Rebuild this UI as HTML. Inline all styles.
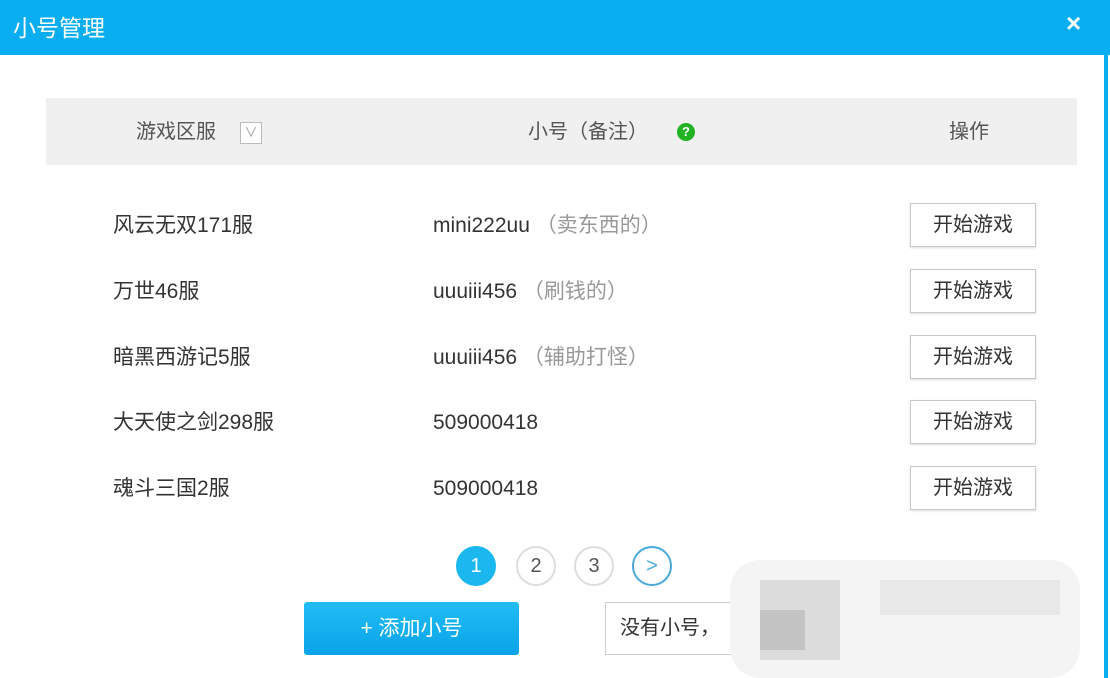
<!DOCTYPE html><html><head><meta charset="utf-8"><style>
body{margin:0;width:1110px;height:678px;background:#fff;position:relative;overflow:hidden;font-family:"Liberation Sans","Noto Sans CJK SC",sans-serif;color:#333}
.a{position:absolute}
.title{left:0;top:0;width:1110px;height:55px;background:#08aef0}
.hd{left:46px;top:98px;width:1031px;height:67px;background:#f0f0f0}
.t{font-size:21px;white-space:nowrap;line-height:26px}
.btn{left:910px;width:124px;height:42px;border:1px solid #c8c8c8;background:#fff;font-size:20px;text-align:center;line-height:42px;box-shadow:0 1px 2px #ddd}
.c{width:36px;height:36px;border-radius:50%;border:2px solid #ddd;text-align:center;line-height:36px;font-size:20px;color:#555;top:546px}
.g{color:#999}
</style></head><body>
<div class="a title"></div>
<div class="a t" style="left:13px;top:15px;color:#fff;font-size:23px">小号管理</div>
<div class="a" style="left:1066px;top:8px;color:#fff;font-size:26px;font-weight:bold">×</div>
<div class="a" style="left:1104px;top:55px;width:4px;height:623px;background:#08aef0"></div>
<div class="a hd"></div>
<div class="a t" style="left:136px;top:119px;color:#555;font-size:20px">游戏区服</div>
<div class="a" style="left:240px;top:122px;width:20px;height:20px;border:1px solid #bbb;background:#fff;color:#999;font-size:13px;text-align:center;line-height:20px">∨</div>
<div class="a t" style="left:528px;top:119px;color:#555;font-size:20px">小号（备注）</div>
<div class="a" style="left:677px;top:123px;width:18px;height:18px;border-radius:50%;background:#22b322;color:#fff;font-size:13px;font-weight:bold;text-align:center;line-height:18px">?</div>
<div class="a t" style="left:949px;top:119px;color:#555;font-size:20px">操作</div>

<div class="a t" style="left:113px;top:213px">风云无双171服</div>
<div class="a t" style="left:433px;top:213px">mini222uu <span class="g">（卖东西的）</span></div>
<div class="a btn" style="top:203px">开始游戏</div>
<div class="a t" style="left:113px;top:279px">万世46服</div>
<div class="a t" style="left:433px;top:279px">uuuiii456 <span class="g">（刷钱的）</span></div>
<div class="a btn" style="top:269px">开始游戏</div>
<div class="a t" style="left:113px;top:345px">暗黑西游记5服</div>
<div class="a t" style="left:433px;top:345px">uuuiii456 <span class="g">（辅助打怪）</span></div>
<div class="a btn" style="top:335px">开始游戏</div>
<div class="a t" style="left:113px;top:410px">大天使之剑298服</div>
<div class="a t" style="left:433px;top:410px">509000418</div>
<div class="a btn" style="top:400px">开始游戏</div>
<div class="a t" style="left:113px;top:476px">魂斗三国2服</div>
<div class="a t" style="left:433px;top:476px">509000418</div>
<div class="a btn" style="top:466px">开始游戏</div>

<div class="a c" style="left:456px;background:#1ab8ee;border-color:#1ab8ee;color:#fff">1</div>
<div class="a c" style="left:516px">2</div>
<div class="a c" style="left:574px">3</div>
<div class="a c" style="left:632px;border-color:#4aa8d8;color:#4aa8d8">&gt;</div>

<div class="a" style="left:304px;top:602px;width:215px;height:53px;border-radius:3px;background:linear-gradient(#20bdf5,#0aa3e8);color:#fff;font-size:21px;text-align:center;line-height:53px">+ 添加小号</div>
<div class="a" style="left:605px;top:602px;width:200px;height:51px;border:1px solid #ccc;font-size:20px;line-height:51px;padding-left:14px">没有小号，</div>
<div class="a" style="left:730px;top:560px;width:350px;height:118px;background:#f4f4f4;border-radius:30px"></div>
<div class="a" style="left:760px;top:580px;width:80px;height:80px;background:#dcdcdc"></div>
<div class="a" style="left:760px;top:610px;width:45px;height:40px;background:#c4c4c4"></div>
<div class="a" style="left:880px;top:580px;width:180px;height:35px;background:#e8e8e8"></div>
</body></html>
